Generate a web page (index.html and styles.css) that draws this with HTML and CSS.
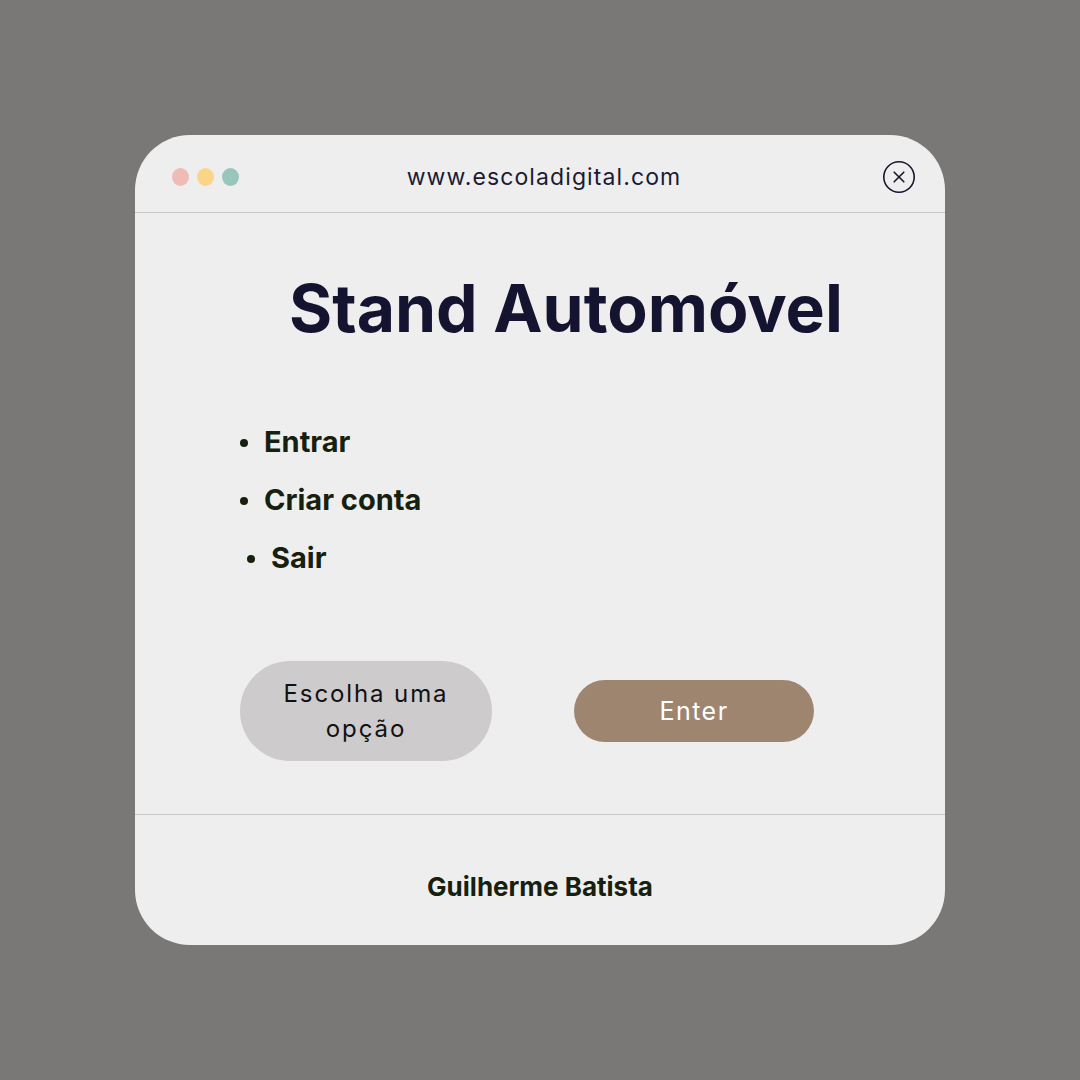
FILE: index.html
```html
<!DOCTYPE html>
<html lang="pt">
<head>
<meta charset="utf-8">
<title>Stand Automóvel</title>
<link rel="stylesheet" href="styles.css">
</head>
<body>
<div class="window">
  <header class="bar">
    <div class="dots">
      <span class="dot dot-red"></span>
      <span class="dot dot-yellow"></span>
      <span class="dot dot-green"></span>
    </div>
    <div class="url">www.escoladigital.com</div>
    <svg class="close" width="34" height="34" viewBox="0 0 34 34" aria-hidden="true">
      <circle cx="17" cy="17" r="15.2" fill="none" stroke="#16162c" stroke-width="1.6"/>
      <path d="M12.2 12.2 L21.8 21.8 M21.8 12.2 L12.2 21.8" stroke="#16162c" stroke-width="1.6" stroke-linecap="round"/>
    </svg>
  </header>
  <main class="content">
    <h1 class="title">Stand Automóvel</h1>
    <ul class="menu">
      <li class="item">Entrar</li>
      <li class="item">Criar conta</li>
      <li class="item item-shift">Sair</li>
    </ul>
    <div class="actions">
      <div class="choice">Escolha uma<br>opção</div>
      <button class="enter">Enter</button>
    </div>
  </main>
  <footer class="foot">Guilherme Batista</footer>
</div>
</body>
</html>
```
FILE: styles.css
```css
html, body {
  margin: 0;
  padding: 0;
}
body {
  background: #7a7876;
  width: 1080px;
  height: 1080px;
  font-family: "Inter", "Noto Sans", sans-serif;
  display: flex;
  justify-content: center;
  padding-top: 135px;
  box-sizing: border-box;
}
.window {
  width: 810px;
  height: 810px;
  background: #eeeeee;
  border-radius: 55px;
  display: flex;
  flex-direction: column;
  overflow: hidden;
}
.bar {
  height: 78px;
  flex: none;
  box-sizing: border-box;
  border-bottom: 1px solid #c9c9c9;
  display: grid;
  grid-template-columns: 1fr auto 1fr;
  align-items: center;
  padding: 7px 29px 0 37px;
}
.dots {
  display: flex;
  gap: 8px;
}
.dot {
  width: 17px;
  height: 18px;
  border-radius: 50%;
  display: block;
}
.dot-red { background: #eebbb6; }
.dot-yellow { background: #fbd585; }
.dot-green { background: #99c6ba; }
.url {
  text-align: center;
  font-size: 23px;
  letter-spacing: 1.1px;
  color: #1b1b33;
}
.close {
  display: block;
  justify-self: end;
}
.content {
  flex: 1;
  padding: 55px 0 0 105px;
  display: flex;
  flex-direction: column;
}
.title {
  margin: 0 0 0 49px;
  font-size: 66px;
  line-height: 80px;
  font-weight: 700;
  color: #141430;
  letter-spacing: 0;
}
.menu {
  margin: 65px 0 0 0;
  padding: 0 0 0 24px;
  list-style: none;
}
.item {
  position: relative;
  font-size: 29px;
  font-weight: 700;
  line-height: 58px;
  color: #15200f;
  padding-left: 0;
}
.item::before {
  content: "";
  position: absolute;
  left: -24px;
  top: 26px;
  width: 8px;
  height: 8px;
  border-radius: 50%;
  background: #15200f;
}
.item-shift {
  margin-left: 7px;
}
.actions {
  display: flex;
  align-items: center;
  margin-top: 74px;
  gap: 82px;
}
.choice {
  width: 252px;
  height: 100px;
  border-radius: 50px;
  background: #cdcbcb;
  display: flex;
  align-items: center;
  justify-content: center;
  text-align: center;
  font-size: 24px;
  line-height: 35px;
  letter-spacing: 1.9px;
  color: #111111;
}
.enter {
  width: 240px;
  height: 62px;
  border-radius: 31px;
  border: none;
  background: #9e8570;
  color: #ffffff;
  font-family: inherit;
  font-size: 25px;
  letter-spacing: 1.5px;
  padding: 0;
}
.foot {
  height: 131px;
  flex: none;
  border-top: 1px solid #c9c9c9;
  display: flex;
  align-items: center;
  justify-content: center;
  font-size: 26px;
  font-weight: 700;
  color: #15200f;
  letter-spacing: 0;
  padding-top: 12px;
  box-sizing: border-box;
}
```
